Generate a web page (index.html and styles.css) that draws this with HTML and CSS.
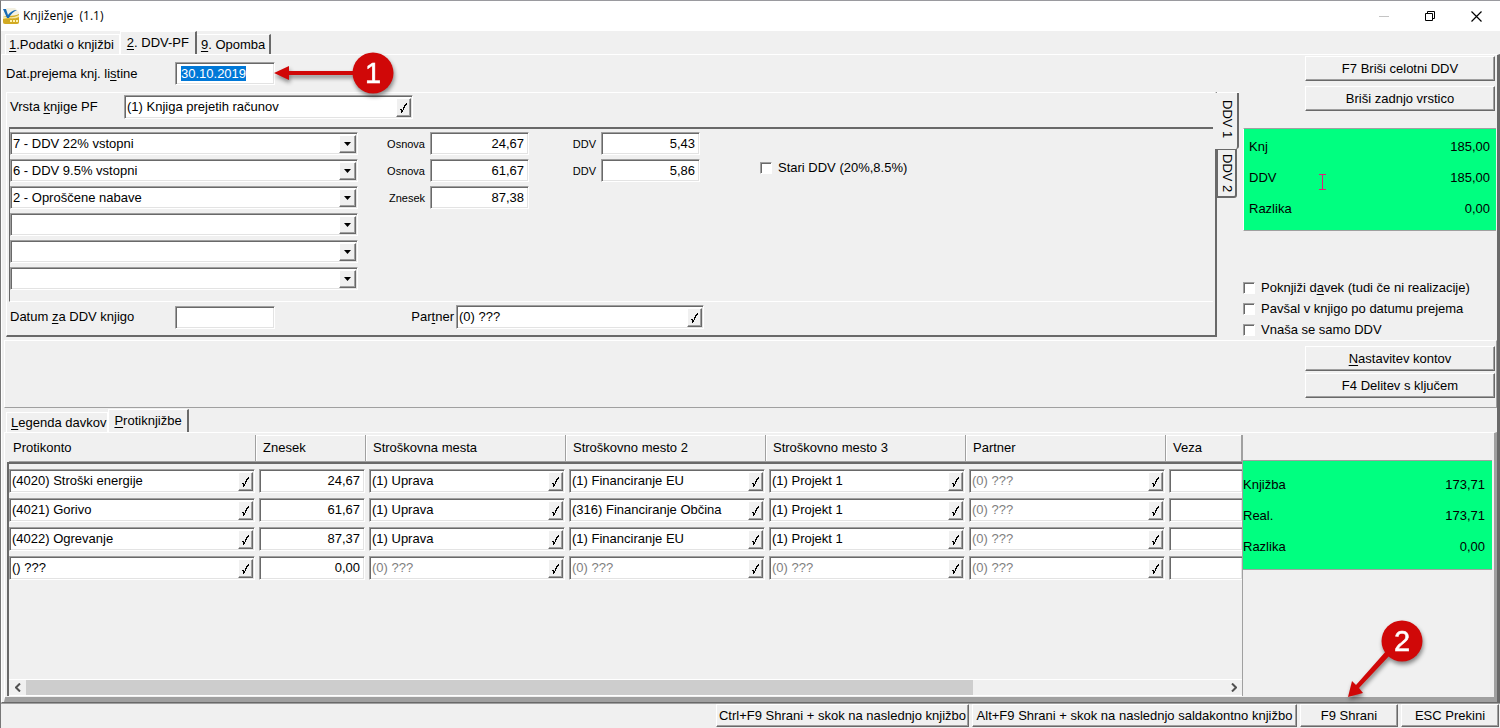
FILE: index.html
```html
<!DOCTYPE html>
<html lang="sl">
<head>
<meta charset="utf-8">
<title>Knjiženje (1.1)</title>
<link rel="stylesheet" href="styles.css">
</head>
<body>
<svg class="defs" aria-hidden="true">
  <symbol id="tick" viewBox="0 0 9 13"><path d="M1 8.500h1.500M2.500 8.500v3M3.500 11V8.500M4.500 9V6M5.500 7V4M6.500 5V3M7.500 3.500V2" fill="none" stroke="#000"/></symbol>
  <symbol id="down" viewBox="0 0 7 4"><path d="M0 0h7L3.500 4z" fill="#000"/></symbol>
</svg>
<div class="window">
  <header class="titlebar">
    <svg class="logo" viewBox="0 0 16 16" aria-hidden="true">
      <path d="M4 0h8l4 4v12H0V4z" fill="#f4f1e2"/>
      <path d="M0 9c4-2 9 0 16-3v8c0 1-1 2-2 2H2c-1 0-2-1-2-2z" fill="#d2aa22"/>
      <path d="M0 9c5-1 9 2 16-2v2c-7 3-11 0-16 2z" fill="#f6e9a4"/>
      <path d="M0 1h3l2 6c2-3 5-5 9-5-4 2-6 4-8 8H4z" fill="#176bb5"/>
      <path d="M7 13h2m1 0h2m1 0h2" stroke="#fff3b0" stroke-width="2"/>
    </svg>
    <h1>Knjiženje&nbsp; (1.1)</h1>
    <div class="winbuttons">
      <button aria-label="Minimiraj" disabled><svg width="11" height="11"><path d="M0 5.500h10" stroke="#c4c4c4"/></svg></button>
      <button aria-label="Obnovi"><svg width="11" height="11"><path d="M.5 2.500h7v7h-7zM2.500 2.500v-2h7v7h-2" fill="none" stroke="#000"/></svg></button>
      <button aria-label="Zapri"><svg width="11" height="11"><path d="M.5.5l10 10M10.500.5l-10 10" stroke="#000" stroke-width="1.200"/></svg></button>
    </div>
  </header>

  <nav class="tabs" role="tablist">
    <button class="tab" role="tab"><u>1</u>.Podatki o knjižbi</button>
    <button class="tab active" role="tab" aria-selected="true"><u>2</u>. DDV-PF</button>
    <button class="tab last" role="tab"><u>9</u>. Opomba</button>
  </nav>

  <main class="page">
    <section class="upper">
      <div class="form">
        <div class="line date-line">
          <label for="date">Dat.prejema knj. li<u>s</u>tine</label>
          <input class="field date" id="date" type="text" value="30.10.2019">
        </div>
        <div class="book">
          <div class="group">
            <div class="line">
              <label class="w-book" for="book">Vrsta <u>k</u>njige PF</label>
              <div class="lookup book-lookup"><input id="book" type="text" value="(1) Knjiga prejetih računov"><button aria-label="Izberi knjigo"><svg><use href="#tick"/></svg></button></div>
            </div>
            <div class="rates">
              <div class="rate-rows">
                <div class="rate">
                  <div class="combo"><select aria-label="Vrsta 1"><option>7 - DDV 22% vstopni</option></select><span class="arrow"><svg><use href="#down"/></svg></span></div>
                  <label for="o1">Osnova</label><input class="field num" id="o1" type="text" value="24,67">
                  <label for="d1">DDV</label><input class="field num" id="d1" type="text" value="5,43">
                </div>
                <div class="rate">
                  <div class="combo"><select aria-label="Vrsta 2"><option>6 - DDV 9.5% vstopni</option></select><span class="arrow"><svg><use href="#down"/></svg></span></div>
                  <label for="o2">Osnova</label><input class="field num" id="o2" type="text" value="61,67">
                  <label for="d2">DDV</label><input class="field num" id="d2" type="text" value="5,86">
                </div>
                <div class="rate">
                  <div class="combo"><select aria-label="Vrsta 3"><option>2 - Oproščene nabave</option></select><span class="arrow"><svg><use href="#down"/></svg></span></div>
                  <label for="o3">Znesek</label><input class="field num" id="o3" type="text" value="87,38">
                </div>
                <div class="rate"><div class="combo"><select aria-label="Vrsta 4"><option></option></select><span class="arrow"><svg><use href="#down"/></svg></span></div></div>
                <div class="rate"><div class="combo"><select aria-label="Vrsta 5"><option></option></select><span class="arrow"><svg><use href="#down"/></svg></span></div></div>
                <div class="rate"><div class="combo"><select aria-label="Vrsta 6"><option></option></select><span class="arrow"><svg><use href="#down"/></svg></span></div></div>
              </div>
              <label class="check old-vat"><input type="checkbox">Stari DDV (20%,8.5%)</label>
            </div>
            <div class="line group-foot">
              <label class="w-date" for="vatdate">Datum <u>z</u>a DDV knjigo</label>
              <input class="field date" id="vatdate" type="text">
              <label class="w-partner" for="partner">Par<u>t</u>ner</label>
              <div class="lookup partner-lookup"><input id="partner" type="text" value="(0) ???"><button aria-label="Izberi partnerja"><svg><use href="#tick"/></svg></button></div>
            </div>
          </div>
          <div class="side-tabs" role="tablist">
            <button class="side-tab on" role="tab" aria-selected="true">DDV 1</button>
            <button class="side-tab" role="tab">DDV 2</button>
          </div>
        </div>
      </div>
      <aside class="side">
        <button class="btn">F7 Briši celotni DDV</button>
        <button class="btn">Briši zadnjo vrstico</button>
        <dl class="totals vat-totals">
          <div><dt>Knj</dt><dd>185,00</dd></div>
          <div><dt>DDV</dt><dd>185,00</dd></div>
          <div><dt>Razlika</dt><dd>0,00</dd></div>
          <svg class="ibeam" width="8" height="16" aria-hidden="true"><path d="M0 .5h7M0 15.500h7M3.500 1v14" fill="none" stroke="#e0207a"/></svg>
        </dl>
        <div class="options">
          <label class="check"><input type="checkbox"><span>Poknjiži d<u>a</u>vek (tudi če ni realizacije)</span></label>
          <label class="check"><input type="checkbox">Pavšal v knjigo po datumu prejema</label>
          <label class="check"><input type="checkbox">Vnaša se samo DDV</label>
        </div>
      </aside>
    </section>

    <section class="tools">
      <button class="btn"><u>N</u>astavitev kontov</button>
      <button class="btn">F4 Delitev s ključem</button>
    </section>

    <nav class="tabs lower-tabs" role="tablist">
      <button class="tab" role="tab"><u>L</u>egenda davkov</button>
      <button class="tab active" role="tab" aria-selected="true"><u>P</u>rotiknjižbe</button>
    </nav>

    <section class="entries">
      <div class="grid">
        <table>
          <colgroup><col class="c-konto"><col class="c-sum"><col class="c-mid"><col class="c-mid"><col class="c-mid"><col class="c-mid"><col></colgroup>
          <thead>
            <tr><th>Protikonto</th><th>Znesek</th><th>Stroškovna mesta</th><th>Stroškovno mesto 2</th><th>Stroškovno mesto 3</th><th>Partner</th><th>Veza</th></tr>
          </thead>
          <tbody id="rows"></tbody>
        </table>
        <div class="scrollbar">
          <button aria-label="Levo"><svg width="6" height="9"><path d="M5 .5l-4 4 4 4" fill="none" stroke="#505050" stroke-width="2"/></svg></button>
          <div class="track"><div class="thumb"></div></div>
          <button aria-label="Desno"><svg width="6" height="9"><path d="M1 .5l4 4-4 4" fill="none" stroke="#505050" stroke-width="2"/></svg></button>
        </div>
      </div>
      <aside class="entry-side">
        <dl class="totals">
          <div><dt>Knjižba</dt><dd>173,71</dd></div>
          <div><dt>Real.</dt><dd>173,71</dd></div>
          <div><dt>Razlika</dt><dd>0,00</dd></div>
        </dl>
      </aside>
    </section>
  </main>

  <footer class="actions">
    <button class="btn w-next">Ctrl+F9 Shrani + skok na naslednjo knjižbo</button>
    <button class="btn w-open">Alt+F9 Shrani + skok na naslednjo saldakontno knjižbo</button>
    <button class="btn w-short">F9 Shrani</button>
    <button class="btn w-short">ESC Prekini</button>
  </footer>

  <svg class="callout callout-1" width="130" height="54" viewBox="0 0 130 54">
    <path d="M5 24l15-7v5h70v4H20v5z" fill="#d00808"/>
    <circle cx="104" cy="24" r="20.500" fill="#d00808"/>
    <text x="104" y="34">1</text>
  </svg>
  <svg class="callout callout-2" width="90" height="90" viewBox="0 0 90 90">
    <path d="M8 82l4-16 4 4 31-35 4 4-32 34 4 5z" fill="#d00808"/>
    <circle cx="62" cy="26" r="20.500" fill="#d00808"/>
    <text x="62" y="36">2</text>
  </svg>
</div>
<script src="app.js"></script>
</body>
</html>
```
FILE: styles.css
```css
* { box-sizing: border-box; }

body {
  margin: 0;
  background: #f0f0f0;
  color: #000;
  font: 13px/16px "Liberation Sans", Arial, sans-serif;
}

button, input, select { font: inherit; color: inherit; margin: 0; border-radius: 0; }
button { background: #f0f0f0; padding: 0; border: 0; white-space: nowrap; }
input { min-width: 0; }
u { text-underline-offset: 2px; }
.defs { display: none; }

.window {
  position: relative;
  display: flex;
  flex-direction: column;
  min-height: 100vh;
  border-top: 1px solid #9a9a9f;
  border-left: 1px solid #777;
}

/* Title bar */
.titlebar {
  display: flex;
  align-items: center;
  height: 30px;
  padding-left: 2px;
  background: #fff;
}
.logo { width: 16px; height: 16px; }
.titlebar h1 {
  flex: 1;
  margin: 0 0 0 4px;
  font: 12px/16px "Open Sans", "Noto Sans", sans-serif;
}
.winbuttons { display: flex; padding-right: 1px; }
.winbuttons button {
  display: grid;
  place-items: center;
  width: 46px;
  height: 28px;
  background: none;
}

/* Tabs */
.tabs { display: flex; align-items: flex-end; height: 23px; padding-left: 4px; }
.tab {
  height: 20px;
  padding: 0 5px 0 3px;
  border: solid #fff;
  border-width: 1px 1px 0;
}
.tab.active {
  height: 23px;
  padding: 0 6px 1px;
  border-right: 2px solid #696969;
}
.tab.last { border-right: 2px solid #696969; border-left: 0; padding: 0 4px; }

/* Main page */
.page {
  flex: 1;
  display: flex;
  flex-direction: column;
  border: solid #fff;
  border-width: 1px 0 0 1px;
  border-right: 3px solid #696969;
  border-bottom: 1px solid #696969;
}
.upper { display: flex; gap: 4px; padding-left: 4px; }
.form { flex: 1; min-width: 0; }
.line { display: flex; align-items: center; }
.date-line { padding: 7px 0; }
.date-line label { width: 169px; }

.field, .lookup, .combo {
  border: 1px solid;
  border-color: #a0a0a0 #fff #fff #a0a0a0;
  box-shadow: inset 1px 1px #696969, inset -1px -1px #e3e3e3;
  background: #fff;
}
.field { height: 23px; padding: 0 4px 1px; outline: none; }
.date { width: 100px; padding-left: 5px; }
.date::selection { background: #0078d7; color: #fff; }
.num { width: 99px; text-align: right; }

.lookup, .combo { display: flex; padding: 2px 1px 1px 2px; }
.lookup { height: 24px; }
.lookup input {
  flex: 1;
  width: 0;
  padding: 0 0 2px;
  border: 0;
  outline: none;
  background: none;
}
.lookup button, .arrow {
  display: grid;
  place-items: center;
  border: 1px solid;
  border-color: #fff #696969 #696969 #fff;
  box-shadow: inset -1px -1px #a0a0a0;
  background: #f0f0f0;
}
.lookup button { width: 15px; }
.lookup svg { width: 9px; height: 13px; shape-rendering: crispEdges; }
.combo { position: relative; width: 348px; height: 23px; }
.combo select {
  flex: 1;
  padding: 0;
  border: 0;
  outline: none;
  appearance: none;
  background: none;
}
.arrow { width: 17px; pointer-events: none; }
.arrow svg { width: 7px; height: 4px; }

.book { display: flex; }
.group {
  flex: 1;
  min-width: 0;
  padding: 2px 0 0 2px;
  border: solid;
  border-width: 1px 2px 2px 1px;
  border-color: #fff #696969 #696969 #fff;
}
.w-book { width: 115px; padding-left: 1px; }
.book-lookup { width: 289px; }
.rates {
  display: flex;
  align-items: flex-start;
  margin: 8px 2px 0 0;
  padding: 3px 0 11px;
  border: solid #696969;
  border-width: 2px 0 0 1px;
  border-bottom: 1px solid #fff;
}
.rate-rows { display: grid; gap: 4px; width: 689px; }
.rate { display: flex; align-items: center; }
.rate label { width: 67px; margin-right: 5px; font-size: 11px; text-align: right; }
.old-vat { margin: 28px 0 0 61px; }
.group-foot { padding: 3px 0 6px 1px; }
.w-date { width: 165px; }
.w-partner { width: 181px; padding-right: 2px; text-align: right; }
.partner-lookup { width: 248px; }

.side-tabs { width: 22px; border-top: 1px solid #fff; }
.side-tab {
  display: block;
  width: 20px;
  height: 49px;
  writing-mode: vertical-rl;
  border: 1px solid #696969;
  border-width: 1px 2px 2px 1px;
  border-radius: 0 0 3px 0;
}
.side-tab.on {
  position: relative;
  width: 24px;
  height: 56px;
  margin-left: -2px;
  padding: 0 0 4px 2px;
  border-width: 0 2px 0 0;
}

.check { display: flex; align-items: center; gap: 6px; height: 21px; white-space: nowrap; }
.check input {
  appearance: none;
  width: 12px;
  height: 12px;
  border: 1px solid;
  border-color: #a0a0a0 #fff #fff #a0a0a0;
  box-shadow: inset 1px 1px #696969;
  background: #fff;
}
.rates .check { height: 16px; }

/* Buttons */
.btn {
  height: 25px;
  border: 1px solid;
  border-color: #fff #696969 #696969 #fff;
  box-shadow: inset -1px -1px #a0a0a0;
}

/* Right column */
.side {
  display: flex;
  flex-direction: column;
  width: 254px;
  padding: 1px 1px 0 0;
}
.side .btn { align-self: flex-end; width: 190px; margin: 0 1px 5px 0; }
.totals {
  position: relative;
  margin: 0;
  background: #00ff80;
}
.totals div { display: flex; justify-content: space-between; height: 31px; align-items: center; }
.totals dd { margin: 0; }
.vat-totals {
  margin-top: 12px;
  padding: 2px 6px 6px 5px;
  border: solid #a0a0a0;
  border-width: 1px 0;
  border-left: 1px solid #fff;
}
.ibeam { position: absolute; left: 75px; top: 45px; }
.options { margin-top: 46px; }

/* Account tools */
.tools {
  display: flex;
  flex-direction: column;
  align-items: flex-end;
  gap: 2px;
  margin: 0 0 0 2px;
  padding: 5px 1px 9px;
  border: 1px solid;
  border-color: #fff #a0a0a0 #a0a0a0 #fff;
}
.tools .btn { width: 190px; }

.lower-tabs { height: 24px; }
.lower-tabs .tab { padding: 0 1px 0 4px; }
.lower-tabs .tab.active { padding: 0 5px 1px; }

/* Entries */
.entries {
  flex: 1;
  display: flex;
  margin-left: 2px;
  padding: 2px 0 1px 2px;
  border: 1px solid #fff;
  border-right: 3px solid #a0a0a0;
  border-bottom: 5px solid #a0a0a0;
}
.grid {
  flex: 1;
  min-width: 0;
  display: flex;
  flex-direction: column;
  border-left: 2px solid #696969;
}
table { width: 100%; table-layout: fixed; border-spacing: 0; }
.c-konto { width: 247px; }
.c-sum { width: 110px; }
.c-mid { width: 200px; }
th {
  height: 27px;
  padding: 0 0 0 7px;
  border: solid #a0a0a0;
  border-width: 0 1px 1px 0;
  box-shadow: inset 1px 1px #fff;
  font-weight: normal;
  text-align: left;
}
th:first-child { padding-left: 4px; box-shadow: -2px 0 #f0f0f0; }
td { padding: 0 1px 5px 3px; }
td:first-child { padding-left: 0; }
td:last-child { padding-right: 0; }
tbody tr:first-child td { padding-top: 5px; border-top: 2px solid #696969; }
td .field { display: block; width: 100%; height: 24px; padding-bottom: 2px; }
td:last-child .field { border-right: 0; }
td .lookup input { padding-left: 0; }
.empty { color: #808080; }

.scrollbar {
  display: flex;
  height: 17px;
  margin-top: auto;
  border-top: 1px solid #fff;
  border-bottom: 1px solid #fff;
}
.scrollbar button { width: 17px; }
.track { flex: 1; }
.thumb { width: 79%; height: 100%; background: #cdcdcd; }

.entry-side { width: 252px; padding-right: 2px; border-left: 1px solid #a0a0a0; }
.entry-side .totals {
  margin-top: 25px;
  padding: 8px 7px 7px 0;
  border: solid #a0a0a0;
  border-width: 1px 0;
}

/* Footer actions */
.actions {
  display: flex;
  justify-content: flex-end;
  gap: 3px;
  height: 25px;
  padding: 0 1px 1px 0;
  border-top: 1px solid #a0a0a0;
}
.actions .btn { height: 23px; }
.w-next { width: 253px; }
.w-open { width: 325px; }
.w-short { width: 98px; }

/* Numbered callouts */
.callout {
  position: absolute;
  overflow: visible;
  filter: drop-shadow(1px 3px 2px rgba(0, 0, 0, .45));
  pointer-events: none;
}
.callout text {
  fill: #fff;
  stroke: #fff;
  stroke-width: 0.5px;
  font: 29px "Liberation Sans", Arial, sans-serif;
  text-anchor: middle;
}
.callout-1 { left: 268px; top: 48px; }
.callout-2 { right: 70px; bottom: 23px; }
```
FILE: app.js
```javascript
const rows = [
  ["(4020) Stroški energije", "24,67", "(1) Uprava", "(1) Financiranje EU", "(1) Projekt 1", "(0) ???"],
  ["(4021) Gorivo", "61,67", "(1) Uprava", "(316) Financiranje Občina", "(1) Projekt 1", "(0) ???"],
  ["(4022) Ogrevanje", "87,37", "(1) Uprava", "(1) Financiranje EU", "(1) Projekt 1", "(0) ???"],
  ["() ???", "0,00", "(0) ???", "(0) ???", "(0) ???", "(0) ???"]
];
const names = ["Protikonto", "Znesek", "Stroškovna mesta", "Stroškovno mesto 2", "Stroškovno mesto 3", "Partner", "Veza"];

function cell(value, col) {
  const label = `aria-label="${names[col]}"`;
  if (col === 1) return `<td><input class="field num" type="text" ${label} value="${value}"></td>`;
  const empty = value.startsWith("(0)") ? "empty" : "";
  return `<td><div class="lookup"><input type="text" class="${empty}" ${label} value="${value}">` +
    `<button aria-label="Izberi"><svg><use href="#tick"/></svg></button></div></td>`;
}

document.getElementById("rows").innerHTML = rows.map(r =>
  `<tr>${r.map(cell).join("")}<td><input class="field" type="text" aria-label="${names[6]}"></td></tr>`
).join("");

const date = document.getElementById("date");
date.focus();
date.select();
```
